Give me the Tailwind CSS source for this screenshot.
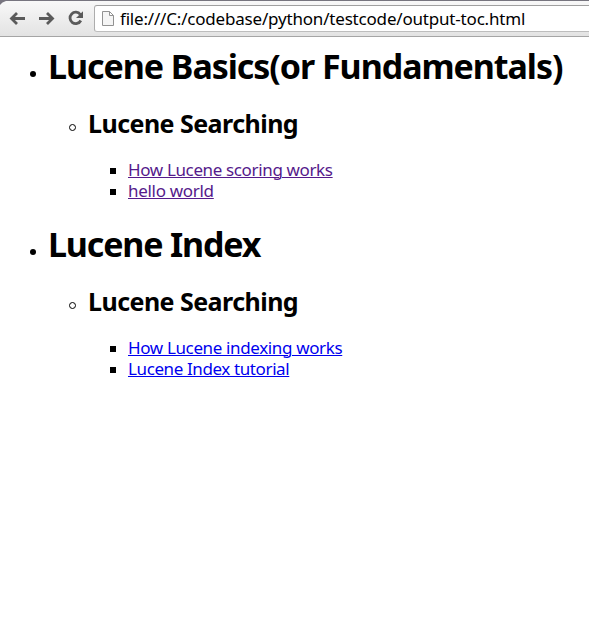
<!DOCTYPE html>
<html lang="en">
<head>
<meta charset="utf-8">
<title>output-toc.html</title>
<script src="https://cdn.jsdelivr.net/npm/@tailwindcss/browser@4"></script>
</head>
<body class="h-[632px] w-[589px] overflow-hidden bg-white font-['Noto_Sans',sans-serif] text-black">
<header class="flex h-[37px] items-start border-t border-b border-t-[#77757f] border-b-[#a5a5a5] bg-linear-to-b from-[#f8f8f8] to-[#e3e3e3]">
  <svg class="h-[35px] w-[94px] shrink-0" viewBox="0 1 94 35" fill="none" stroke="#5a5a5a" stroke-width="2.800">
    <path d="M0 1H6Q2 2 0 5Z" fill="#77757f" stroke="none"/>
    <path d="M25 18.500H12M17 13L11.500 18.500L17 24"/>
    <path d="M39 18.500H52M47 13L52.500 18.500L47 24"/>
    <path d="M80.300 14.500A5.700 5.700 0 1 0 80.800 20.500"/>
    <path d="M83 11.300V18H76Z" fill="#5a5a5a" stroke="none"/>
  </svg>
  <div class="mt-1 flex h-[27px] grow items-center rounded-l-[3px] border border-r-0 border-t-[#a0a0a0] border-b-[#bdbdbd] border-l-[#adadad] bg-white pl-[7px]">
    <svg class="h-4 w-3 shrink-0" viewBox="0 0 12 16" fill="#f5f5f5" stroke="#929292">
      <path d="M.5 .5H7.500L11.500 4.500V14.500H.5ZM7.500 .5V4.500H11.500"/>
    </svg>
    <span class="ml-[6px] whitespace-nowrap text-[17px] leading-[25px] tracking-[-0.19px]">file:///C:/codebase/python/testcode/output-toc.html</span>
  </div>
</header>
<main class="whitespace-nowrap pt-[7px]">
  <ul>
    <li>
      <div class="flex h-11 items-center pl-[30px]">
        <span class="mt-[15px] size-[6px] shrink-0 rounded-full bg-black"></span>
        <h1 class="ml-3 text-[34px] font-bold leading-[44px] tracking-[-1.05px]">Lucene Basics(or Fundamentals)</h1>
      </div>
      <ul class="pt-[18px]">
        <li>
          <div class="flex h-[34px] items-center pl-[69px]">
            <span class="mt-[9px] size-[7px] shrink-0 rounded-full border border-black"></span>
            <h2 class="ml-3 text-[25px] font-bold leading-[34px] tracking-[-0.54px]">Lucene Searching</h2>
          </div>
          <ul class="pt-[19px] text-[17px] leading-[21px]">
            <li class="flex h-[21px] items-center pl-[110px]"><span class="mt-[3px] size-[6px] bg-black"></span><a class="ml-3 tracking-[-0.36px] text-[#551a8b] underline decoration-1 underline-offset-1">How Lucene scoring works</a></li>
            <li class="flex h-[21px] items-center pl-[110px]"><span class="mt-[3px] size-[6px] bg-black"></span><a class="ml-3 tracking-[-0.3px] text-[#551a8b] underline decoration-1 underline-offset-1">hello world</a></li>
          </ul>
        </li>
      </ul>
    </li>
    <li class="pt-[21px]">
      <div class="flex h-11 items-center pl-[30px]">
        <span class="mt-[15px] size-[6px] shrink-0 rounded-full bg-black"></span>
        <h1 class="ml-3 text-[34px] font-bold leading-[44px] tracking-[-1.17px]">Lucene Index</h1>
      </div>
      <ul class="pt-[18px]">
        <li>
          <div class="flex h-[34px] items-center pl-[69px]">
            <span class="mt-[9px] size-[7px] shrink-0 rounded-full border border-black"></span>
            <h2 class="ml-3 text-[25px] font-bold leading-[34px] tracking-[-0.54px]">Lucene Searching</h2>
          </div>
          <ul class="pt-[19px] text-[17px] leading-[21px]">
            <li class="flex h-[21px] items-center pl-[110px]"><span class="mt-[3px] size-[6px] bg-black"></span><a class="ml-3 tracking-[-0.36px] text-[#0000ee] underline decoration-1 underline-offset-1">How Lucene indexing works</a></li>
            <li class="flex h-[21px] items-center pl-[110px]"><span class="mt-[3px] size-[6px] bg-black"></span><a class="ml-3 tracking-[-0.39px] text-[#0000ee] underline decoration-1 underline-offset-1">Lucene Index tutorial</a></li>
          </ul>
        </li>
      </ul>
    </li>
  </ul>
</main>
</body>
</html>
